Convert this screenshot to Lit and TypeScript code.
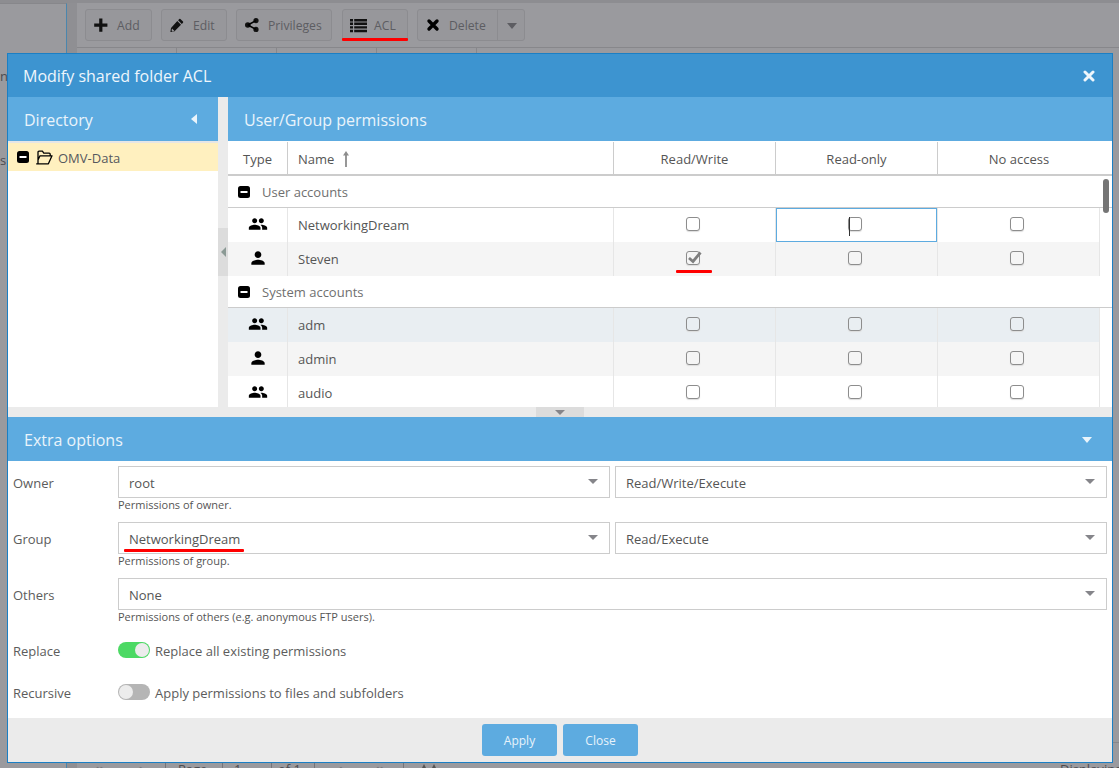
import { LitElement, html, css, svg } from "lit";
import { customElement } from "lit/decorators.js";

const people = svg`<path d="M16 11c1.66 0 2.99-1.34 2.99-3S17.66 5 16 5c-1.66 0-3 1.34-3 3s1.34 3 3 3zm-8 0c1.66 0 2.99-1.34 2.99-3S9.66 5 8 5C6.34 5 5 6.34 5 8s1.34 3 3 3zm0 2c-2.33 0-7 1.17-7 3.5V19h14v-2.5c0-2.33-4.67-3.5-7-3.5zm8 0c-.29 0-.62.02-.97.05 1.16.84 1.97 1.97 1.97 3.45V19h6v-2.5c0-2.33-4.67-3.5-7-3.5z"/>`;
const person = svg`<path d="M12 12c2.21 0 4-1.79 4-4s-1.79-4-4-4-4 1.79-4 4 1.79 4 4 4zm0 2c-2.67 0-8 1.34-8 4v2h16v-2c0-2.66-5.33-4-8-4z"/>`;

const minusBox = html`<svg class="minus" viewBox="0 0 12 12"><rect width="12" height="12" rx="2.5" fill="#000"/><rect x="2.5" y="5" width="7" height="2" fill="#fff"/></svg>`;

const tbIcons: Record<string, unknown> = {
  plus: svg`<path d="M5.2 .5h3.2v5h5v3.2h-5v5H5.2v-5h-5V5.500h5z"/>`,
  pencil: svg`<path d="M10.4 1 13 3.6a.8.8 0 0 1 0 1.1l-1.2 1.2-3.7-3.700L9.300 1a.8.8 0 0 1 1.1 0zM7.300 3 11 6.700 4.300 13.400.4 14l.6-3.900zM2 10.600l-.4 2 .9.9 2-.4z"/>`,
  share: svg`<circle cx="11" cy="2.600" r="2.600"/><circle cx="11" cy="11.400" r="2.600"/><circle cx="2.800" cy="7" r="2.800"/><path d="M2.800 7 11 2.600M2.800 7 11 11.400" stroke="#000" stroke-width="1.600" fill="none"/>`,
  list: svg`<path d="M0 1h3v2.400H0zM4.200 1H17v2.400H4.200zM0 4.600h3V7H0zM4.200 4.600H17V7H4.200zM0 8.200h3v2.400H0zM4.200 8.200H17v2.400H4.200zM0 11.800h3v2.400H0zM4.200 11.800H17v2.400H4.200z"/>`,
  times: svg`<path d="M3 3 11 11M11 3 3 11" stroke="#000" stroke-width="3.400" stroke-linecap="round" fill="none"/>`,
};

type Row = { kind: "u" | "g"; name: string; cls?: string; checked?: boolean; focus?: boolean };
const userRows: Row[] = [
  { kind: "g", name: "NetworkingDream", focus: true },
  { kind: "u", name: "Steven", cls: "alt", checked: true },
];
const sysRows: Row[] = [
  { kind: "g", name: "adm", cls: "sel" },
  { kind: "u", name: "admin", cls: "alt" },
  { kind: "g", name: "audio" },
];

@customElement("app-root")
export class AppRoot extends LitElement {
  static styles = css`
    :host { display: block; position: relative; width: 1119px; height: 768px; overflow: hidden;
      font-family: "Open Sans", "Noto Sans", sans-serif; font-size: 13px; color: #555; background: #9a9a9e; }
    * { box-sizing: border-box; }

    /* page behind the modal mask */
    .page { display: flex; height: 768px; padding-top: 3px; background: linear-gradient(#8d8d91 3px, #9a9a9e 3px); overflow: hidden; }
    .side { width: 67px; border-right: 1px solid #4b86ad; border-top: 1px solid #87878b; color: #4c4c50; display: flex; flex-direction: column; background: #9a9a9e; }
    .side span { line-height: 18px; }
    .side .s1 { margin-top: 63px; }
    .side .s2 { margin-top: 66px; }
    .gutter { width: 10px; background: #8f8f93; }
    .main { flex: 1; display: flex; flex-direction: column; min-width: 0; background: #9a9a9e; }
    .toolbar { display: flex; height: 45px; flex: none; padding: 6px 0 0 8px; border-bottom: 1px solid #87878b; }
    .tb { height: 32px; display: flex; align-items: center; gap: 9px; border: 1px solid #8c8c90; border-radius: 3px; background: #97979b; color: #5d5d62; font-size: 12.200px; padding: 0 0 0 8px; margin-right: 9px; white-space: nowrap; }
    .tb svg { height: 15px; fill: #111; flex: none; }
    .tb .ic14 { width: 14px; }
    .tb .ic17 { width: 17px; margin: 0 -2px 0 -1px; }
    .tb.add { width: 67px; }
    .tb.edit { width: 66px; }
    .tb.priv { width: 96px; }
    .tb.acl { width: 66px; margin-left: 1px; }
    .tb.del { width: 108px; position: relative; }
    .tb.del i { position: absolute; left: 79px; top: 0; bottom: 0; border-left: 1px solid #8c8c90; width: 28px; }
    .tb.del i::after { content: ""; position: absolute; left: 9px; top: 13px; border: 5px solid transparent; border-top: 6px solid #5d5d62; border-bottom: 0; }
    .cols { flex: 1; display: flex; min-height: 0; }
    .cols div { width: 100px; border-right: 1px solid #87878b; height: 10px; }
    .pager { height: 26px; flex: none; display: flex; border-top: 1px solid #87878b; color: #4c4c50; line-height: 18px; }
    .seg { border-right: 1px solid #75757a; padding-top: 17px; white-space: nowrap; position: relative; }
    .seg.a { width: 89px; }
    .seg.b { width: 57px; padding-left: 12px; }
    .seg.c { width: 49px; padding-left: 11px; }
    .seg.d { width: 43px; padding-left: 6px; }
    .seg.e { width: 89px; }
    .seg.f { border-right: 0; width: 40px; }
    .seg svg { position: absolute; left: 18px; top: 21px; width: 14px; height: 4px; }
    .ch { position: absolute; top: 16px; color: #77777b; font-size: 15px; font-weight: 700; }
    .ch.c1 { left: 17px; }
    .ch.c2 { left: 60px; }
    .ch.c3 { left: 24px; }
    .ch.c4 { left: 61px; }
    .spacer { flex: 1; }
    .disp { width: 59px; flex: none; overflow: hidden; padding-top: 17px; white-space: nowrap; }
    .edge { position: absolute; left: 1113px; top: 742px; width: 6px; height: 1px; background: #87878b; z-index: 1; }

    /* annotations */
    .red { position: absolute; background: #f00; border-radius: 1px; z-index: 5; height: 3px; }
    .r1 { left: 342px; top: 38px; width: 66px; }
    .r2 { left: 676px; top: 270px; width: 36px; }
    .r3 { left: 124px; top: 549px; width: 120px; }

    /* window */
    .win { position: absolute; left: 7px; top: 53px; width: 1106px; height: 710px; border: 1px solid #1b7fc4; background: #ebebeb; display: flex; flex-direction: column; z-index: 3; }
    .title { height: 43px; flex: none; background: #3d94d0; color: #eef6fc; font-size: 16px; display: flex; align-items: center; justify-content: space-between; padding: 0 17px 0 15px; }
    .title svg { width: 12px; height: 12px; }
    .mid { height: 310px; flex: none; display: flex; }
    .head { height: 44px; flex: none; background: #5dabe0; color: #eaf4fb; font-size: 16px; display: flex; align-items: center; justify-content: space-between; padding-top: 2px; }
    .dir { width: 210px; flex: none; background: #fff; display: flex; flex-direction: column; }
    .dir .head { padding-left: 16px; padding-right: 21px; }
    .tri-l { width: 0; height: 0; border: 5px solid transparent; border-left: 0; border-right: 6px solid #eaf4fb; margin-top: -2px; }
    .tree { margin-top: 2px; height: 28px; background: #fff0bf; display: flex; align-items: center; padding-left: 9px; box-shadow: 0 -2px 0 #e6e6e6; color: #56585e; }
    .minus { width: 12px; height: 12px; flex: none; display: block; }
    .tree .fold { width: 18px; height: 15px; margin: 0 5px 0 6px; flex: none; }
    .tree span { padding-top: 2px; }
    .vsplit { width: 10px; flex: none; display: flex; align-items: center; }
    .vh { width: 10px; height: 48px; background: #dcdcdc; display: flex; align-items: center; padding-left: 3px; }
    .vh::after { content: ""; border: 5px solid transparent; border-left: 0; border-right: 5px solid #8b9a95; }
    .grid { flex: 1; background: #fff; display: flex; flex-direction: column; min-width: 0; }
    .grid .head { padding-left: 16px; }
    .thead { height: 34px; flex: none; margin-top: 1px; display: grid; grid-template-columns: 60px 326px 162px 162px 1fr; border-bottom: 2px solid #ccc; }
    .thead > div { border-right: 1px solid #ccc; display: flex; align-items: center; justify-content: center; padding-top: 2px; }
    .thead > div:last-child { border-right: 0; padding-right: 12px; }
    .thead .nm { justify-content: flex-start; padding-left: 10px; gap: 8px; }
    .thead .nm svg { width: 8px; height: 16px; }
    .body { flex: 1; display: flex; position: relative; min-height: 0; overflow: hidden; }
    .rows { width: 872px; flex: none; }
    .sb { flex: 1; position: relative; }
    .sb i { position: absolute; left: 3px; top: 3px; width: 6px; height: 34px; border-radius: 3px; background: #757575; }
    .grp { height: 32px; display: flex; align-items: center; padding-left: 10px; border-bottom: 1px solid #ccc; color: #6f6f6f; gap: 12px; width: 884px; position: relative; }
    .row { height: 34px; display: grid; grid-template-columns: 60px 326px 162px 162px 162px; background: #fff; }
    .row.alt { background: #f5f5f5; }
    .row.sel { background: #e9eef2; }
    .row > div { border-right: 1px solid #e6e6e6; display: flex; align-items: center; justify-content: center; position: relative; }
    .row .ty svg { width: 20px; height: 20px; fill: #000; margin-top: -2px; }
    .row .name { justify-content: flex-start; padding-left: 10px; }
    .row .focus::after { content: ""; position: absolute; left: 0; right: 0; top: 0; height: 32px; border: 1px solid #5dabe0; }
    .row .focus::before { content: ""; position: absolute; left: 73px; top: 9px; height: 19px; width: 1px; background: #333; z-index: 1; }
    .cb { width: 14px; height: 14px; border: 1.500px solid #8d8d8d; border-radius: 3px; background: #fff; margin: -2px 0 0 -3px; position: relative; flex: none; box-shadow: 0 1px 1px #ddd; }
    .row.alt .cb { background: #f5f5f5; }
    .row.sel .cb { background: #e9eef2; }
    .cb svg { position: absolute; left: -1.500px; top: -1.500px; width: 15px; height: 14px; overflow: visible; }
    .hsplit { height: 10px; flex: none; display: flex; justify-content: center; }
    .hh { width: 48px; height: 10px; background: #dcdcdc; display: flex; justify-content: center; align-items: center; }
    .hh::after { content: ""; border: 5px solid transparent; border-top: 5px solid #85858a; border-bottom: 0; }
    .extra { height: 301px; flex: none; background: #fff; display: flex; flex-direction: column; }
    .extra .head { padding-left: 16px; padding-right: 20px; }
    .tri-d { width: 0; height: 0; border: 5px solid transparent; border-top: 6px solid #eaf4fb; border-bottom: 0; }
    .form { flex: 1; padding: 5px 5px 0 5px; display: flex; flex-direction: column; }
    .fr { display: grid; grid-template-columns: 105px 1fr; margin-bottom: 10px; }
    .fr label { height: 32px; line-height: 34px; color: #5c5c5c; }
    .fields { display: flex; gap: 5px; }
    .sel-f { flex: 1; height: 32px; border: 1px solid #ccc; display: flex; align-items: center; justify-content: space-between; padding: 2px 11px 0 10px; background: #fff; color: #555; }
    .sel-f::after { content: ""; border: 5px solid transparent; border-top: 5px solid #85858a; border-bottom: 0; margin-top: -4px; }
    .hint { font-size: 11px; line-height: 14px; color: #555; height: 14px; }
    .sw { display: flex; align-items: center; height: 32px; gap: 5px; color: #5c5c5c; }
    .sw span:last-child { padding-top: 2px; }
    .tg { width: 32px; height: 16px; border-radius: 8px; position: relative; flex: none; background: #b5b5b5; }
    .tg::after { content: ""; position: absolute; left: 1px; top: 1px; width: 14px; height: 14px; border-radius: 50%; background: #ececec; }
    .tg.on { background: #4cd964; }
    .tg.on::after { left: 17px; }
    .foot { height: 44px; flex: none; display: flex; justify-content: center; gap: 6px; padding-top: 6px; }
    .btn { width: 75px; height: 32px; border-radius: 3px; background: #5dabe0; color: #e8f3fb; font-size: 12px; display: flex; align-items: center; justify-content: center; }
  `;

  private tb(cls: string, icon: string, label: string, extra: unknown = "") {
    const w = icon === "list" ? 17 : 14;
    return html`<div class="tb ${cls}"><svg class="ic${w}" viewBox="0 0 ${w} 15">${tbIcons[icon]}</svg><span>${label}</span>${extra}</div>`;
  }

  private renderRow(r: Row) {
    return html`<div class="row ${r.cls ?? ""}">
      <div class="ty"><svg viewBox="0 0 24 24">${r.kind === "g" ? people : person}</svg></div>
      <div class="name">${r.name}</div>
      <div>${this.cb(r.checked)}</div>
      <div class="${r.focus ? "focus" : ""}">${this.cb()}</div>
      <div>${this.cb()}</div>
    </div>`;
  }

  private cb(checked = false) {
    return html`<span class="cb">${checked
      ? html`<svg viewBox="0 0 15 14"><path d="M3 7 7 10.500 14.500 1.500" stroke="#7f7f7f" stroke-width="2.800" fill="none"/></svg>`
      : ""}</span>`;
  }

  render() {
    return html`
      <div class="page">
        <div class="side"><span class="s1">na</span><span class="s2">s</span></div>
        <div class="gutter"></div>
        <div class="main">
          <div class="toolbar">
            ${this.tb("add", "plus", "Add")}
            ${this.tb("edit", "pencil", "Edit")}
            ${this.tb("priv", "share", "Privileges")}
            ${this.tb("acl", "list", "ACL")}
            ${this.tb("del", "times", "Delete", html`<i></i>`)}
          </div>
          <div class="cols"><div></div><div></div><div></div><div></div></div>
          <div class="pager">
            <div class="seg a"><span class="ch c1">«</span><span class="ch c2">‹</span></div>
            <div class="seg b">Page</div>
            <div class="seg c">1</div>
            <div class="seg d">of 1</div>
            <div class="seg e"><span class="ch c3">›</span><span class="ch c4">»</span></div>
            <div class="seg f"><svg viewBox="0 0 14 4"><path d="M0 4 2 0 4 4zM10 4 12 0 14 4z" fill="#555"/></svg></div>
            <div class="spacer"></div>
            <div class="disp">Displaying</div>
          </div>
        </div>
      </div>
      <div class="edge"></div>

      <div class="win">
        <div class="title">
          <span>Modify shared folder ACL</span>
          <svg viewBox="0 0 12 12"><path d="M2 2 10 10M10 2 2 10" stroke="#eef6fc" stroke-width="3" stroke-linecap="round"/></svg>
        </div>
        <div class="mid">
          <div class="dir">
            <div class="head"><span>Directory</span><i class="tri-l"></i></div>
            <div class="tree">
              ${minusBox}
              <svg class="fold" viewBox="0 0 18 15"><path d="M3 13.800V2.200c0-.6.4-1 1-1h3.400l1.400 2h5.400c.6 0 1 .4 1 1v1.600M1.200 13.800h12.200l3.600-8H5L3 10" fill="none" stroke="#000" stroke-width="1.300" stroke-linejoin="round"/></svg>
              <span>OMV-Data</span>
            </div>
          </div>
          <div class="vsplit"><div class="vh"></div></div>
          <div class="grid">
            <div class="head"><span>User/Group permissions</span></div>
            <div class="thead">
              <div>Type</div>
              <div class="nm"><span>Name</span><svg viewBox="0 0 8 16"><path d="M4 0 7 4.500H4.900V16H3.100V4.500H1z" fill="#8d8d8d"/></svg></div>
              <div>Read/Write</div>
              <div>Read-only</div>
              <div>No access</div>
            </div>
            <div class="body">
              <div class="rows">
                <div class="grp">${minusBox}<span>User accounts</span></div>
                ${userRows.map((r) => this.renderRow(r))}
                <div class="grp">${minusBox}<span>System accounts</span></div>
                ${sysRows.map((r) => this.renderRow(r))}
              </div>
              <div class="sb"><i></i></div>
            </div>
          </div>
        </div>
        <div class="hsplit"><div class="hh"></div></div>
        <div class="extra">
          <div class="head"><span>Extra options</span><i class="tri-d"></i></div>
          <div class="form">
            <div class="fr"><label>Owner</label><div>
              <div class="fields"><div class="sel-f">root</div><div class="sel-f">Read/Write/Execute</div></div>
              <div class="hint">Permissions of owner.</div></div></div>
            <div class="fr"><label>Group</label><div>
              <div class="fields"><div class="sel-f">NetworkingDream</div><div class="sel-f">Read/Execute</div></div>
              <div class="hint">Permissions of group.</div></div></div>
            <div class="fr"><label>Others</label><div>
              <div class="fields"><div class="sel-f">None</div></div>
              <div class="hint">Permissions of others (e.g. anonymous FTP users).</div></div></div>
            <div class="fr"><label>Replace</label><div class="sw"><span class="tg on"></span><span>Replace all existing permissions</span></div></div>
            <div class="fr"><label>Recursive</label><div class="sw"><span class="tg"></span><span>Apply permissions to files and subfolders</span></div></div>
          </div>
        </div>
        <div class="foot"><div class="btn">Apply</div><div class="btn">Close</div></div>
      </div>

      <div class="red r1"></div>
      <div class="red r2"></div>
      <div class="red r3"></div>
    `;
  }
}
